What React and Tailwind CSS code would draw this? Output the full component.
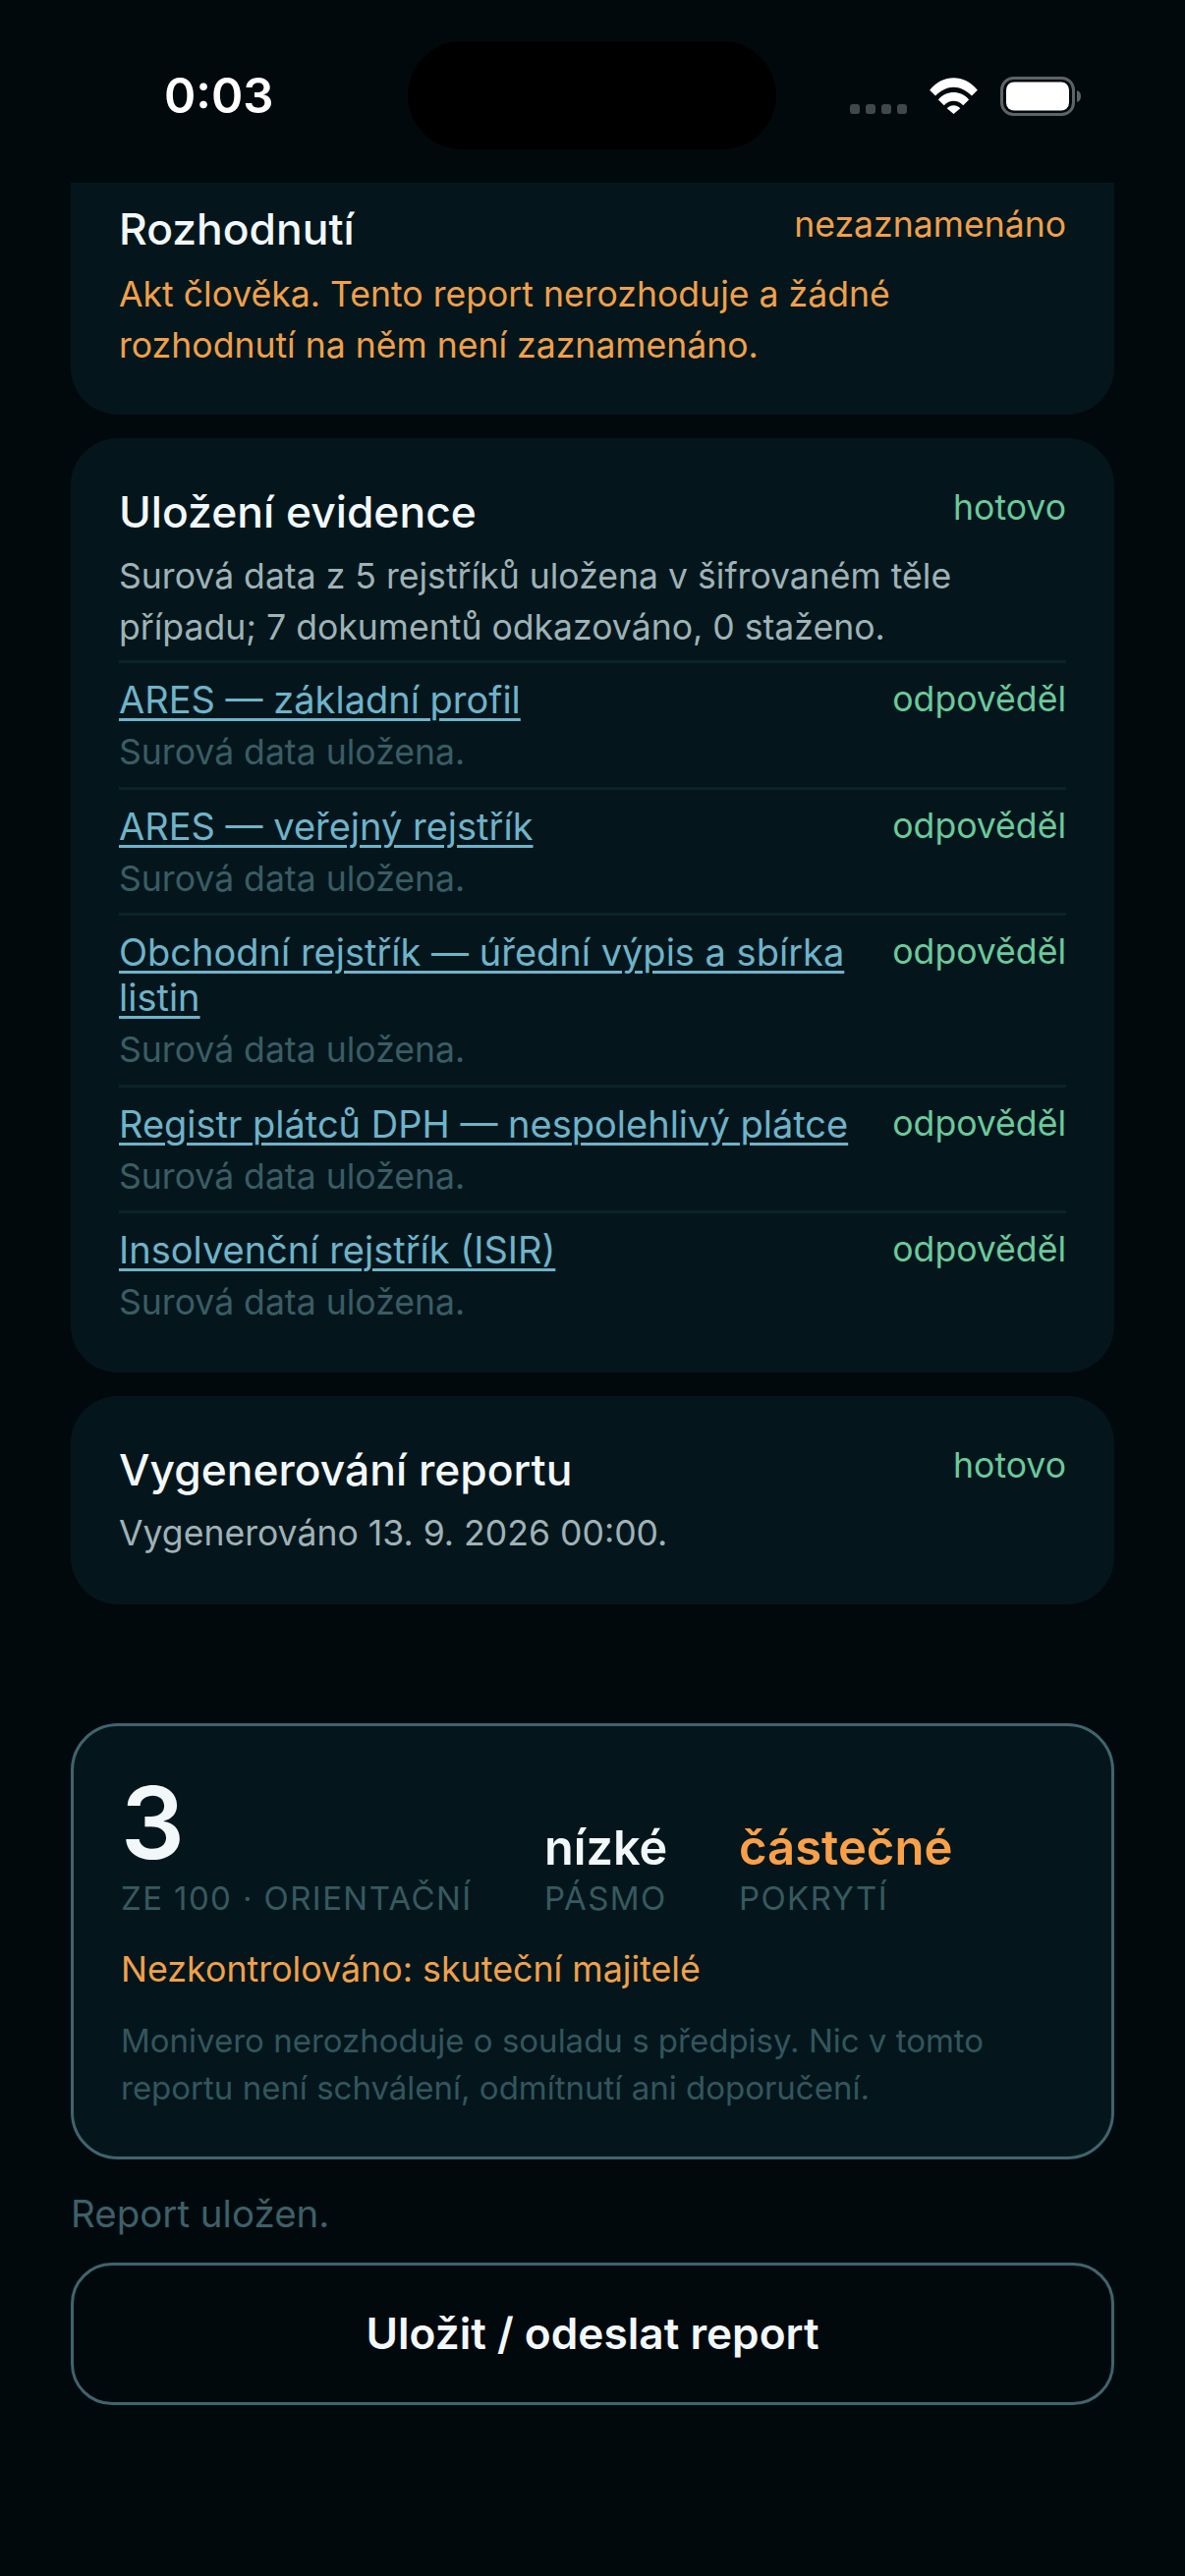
import React from "react";

const FONT = "font-['Inter','Noto_Sans',sans-serif]";

function Source({ name }) {
  return (
    <div className="border-t-[3px] border-[#0a2329] pt-[14px] pb-[11.5px] flex justify-between items-start">
      <div className="w-[770px]">
        <div className="text-[38px] leading-[46px] text-[#6fb3c9] underline underline-offset-[5px] decoration-[3px]">{name}</div>
        <div className="text-[35.6px] leading-[46px] mt-[8px] text-[#3a5c64]">Surová data uložena.</div>
      </div>
      <div className="text-[35.6px] leading-[46px] text-[#6cc99b]">odpověděl</div>
    </div>
  );
}

function CardHead({ title, status, color }) {
  return (
    <div className="flex justify-between items-start">
      <div className="text-[44.4px] leading-[54px] font-medium text-[#f2f8fa]">{title}</div>
      <div className={`text-[35.6px] leading-[46px] ${color}`}>{status}</div>
    </div>
  );
}

function SignalDots() {
  return (
    <div className="flex gap-[6px] mt-[28px]">
      <span className="w-[10px] h-[10px] rounded-[3px] bg-[#41484c]" />
      <span className="w-[10px] h-[10px] rounded-[3px] bg-[#41484c]" />
      <span className="w-[10px] h-[10px] rounded-[3px] bg-[#41484c]" />
      <span className="w-[10px] h-[10px] rounded-[3px] bg-[#41484c]" />
    </div>
  );
}

export default function App() {
  return (
    <div className={`${FONT} relative w-[1206px] h-[2622px] overflow-hidden bg-[#02090d] text-white`}>
      {/* dynamic island */}
      <div className="absolute left-[415px] top-[42px] w-[375px] h-[110px] rounded-[55px] bg-black" />

      <div className="h-[186px] pt-[70px] pl-[167px] pr-[106px] flex justify-between items-start">
        <div className="text-[49px] leading-[56px] font-semibold">0:03</div>
        <div className="flex items-start gap-[22px] pt-[8px]">
          <SignalDots />
          <svg width="51" height="37" viewBox="0 0 50 38" className="mt-[1px]">
            <path d="M0 13 C14 -4 36 -4 50 13 L44 19 C32 7 18 7 6 19 Z" fill="#fff" />
            <path d="M9 23 C18 13 32 13 41 23 L35 29 C29 23 21 23 15 29 Z" fill="#fff" />
            <path d="M18 32 C22 28 28 28 32 32 L25 38 Z" fill="#fff" />
          </svg>
          <svg width="82" height="40" viewBox="0 0 82 40">
            <rect x="1.5" y="1.5" width="73" height="37" rx="12" fill="none" stroke="#5d6467" strokeWidth="3" />
            <rect x="6" y="5.5" width="64" height="29" rx="8" fill="#fff" />
            <path d="M78 14 C81 15 82 17 82 20 C82 23 81 25 78 26 Z" fill="#5d6467" />
          </svg>
        </div>
      </div>

      <div className="px-[72px] flex flex-col gap-[24px]">
        <section className="bg-[#04161c] rounded-b-[48px] h-[236px] px-[49px] pt-[20px]">
          <CardHead title="Rozhodnutí" status="nezaznamenáno" color="text-[#f0a04b]" />
          <p className="text-[35.6px] leading-[52px] mt-[14px] text-[#f0a04b] w-[900px]">
            Akt člověka. Tento report nerozhoduje a žádné rozhodnutí na něm není zaznamenáno.
          </p>
        </section>

        <section className="bg-[#04161c] rounded-[48px] h-[951px] px-[49px] pt-[48px]">
          <CardHead title="Uložení evidence" status="hotovo" color="text-[#6cc99b]" />
          <p className="text-[35.6px] leading-[52px] mt-[13px] mb-[7px] text-[#9fb2b6] w-[900px]">
            Surová data z 5 rejstříků uložena v šifrovaném těle případu; 7 dokumentů odkazováno, 0 staženo.
          </p>
          <Source name="ARES — základní profil" />
          <Source name="ARES — veřejný rejstřík" />
          <Source name="Obchodní rejstřík — úřední výpis a sbírka listin" />
          <Source name="Registr plátců DPH — nespolehlivý plátce" />
          <Source name="Insolvenční rejstřík (ISIR)" />
        </section>

        <section className="bg-[#04161c] rounded-[48px] h-[212px] px-[49px] pt-[48px]">
          <CardHead title="Vygenerování reportu" status="hotovo" color="text-[#6cc99b]" />
          <p className="text-[35.6px] leading-[52px] mt-[12px] text-[#9fb2b6]">Vygenerováno 13. 9. 2026 00:00.</p>
        </section>
      </div>

      <div className="px-[72px] mt-[121px]">
        <section className="h-[444px] rounded-[48px] border-[3px] border-[#3f646d] bg-[#04161c] px-[48px] pt-[42px]">
          <div className="flex items-end">
            <div className="w-[431px]">
              <div className="text-[102px] leading-[112px] font-semibold text-[#f2f8fa]">3</div>
              <div className="text-[33px] leading-[42px] tracking-[1.4px] text-[#37595f]">ZE 100 · ORIENTAČNÍ</div>
            </div>
            <div className="w-[198px]">
              <div className="text-[48.6px] leading-[60px] font-semibold text-[#f2f8fa]">nízké</div>
              <div className="text-[33px] leading-[42px] tracking-[1.4px] text-[#37595f]">PÁSMO</div>
            </div>
            <div>
              <div className="text-[49px] leading-[60px] font-semibold text-[#f9a049]">částečné</div>
              <div className="text-[33px] leading-[42px] tracking-[1.4px] text-[#37595f]">POKRYTÍ</div>
            </div>
          </div>
          <div className="text-[35.8px] leading-[46px] mt-[28px] text-[#f0a04b]">Nezkontrolováno: skuteční majitelé</div>
          <p className="text-[33px] leading-[48px] mt-[26px] text-[#33555d] w-[940px]">
            Monivero nerozhoduje o souladu s předpisy. Nic v tomto reportu není schválení, odmítnutí ani doporučení.
          </p>
        </section>

        <div className="text-[38.5px] leading-[48px] mt-[31px] text-[#3d6069]">Report uložen.</div>

        <button className="mt-[26px] w-full h-[145px] rounded-[42px] border-[3px] border-[#3f646d] text-[44.2px] font-semibold text-[#f2f8fa]">
          Uložit / odeslat report
        </button>
      </div>
    </div>
  );
}
